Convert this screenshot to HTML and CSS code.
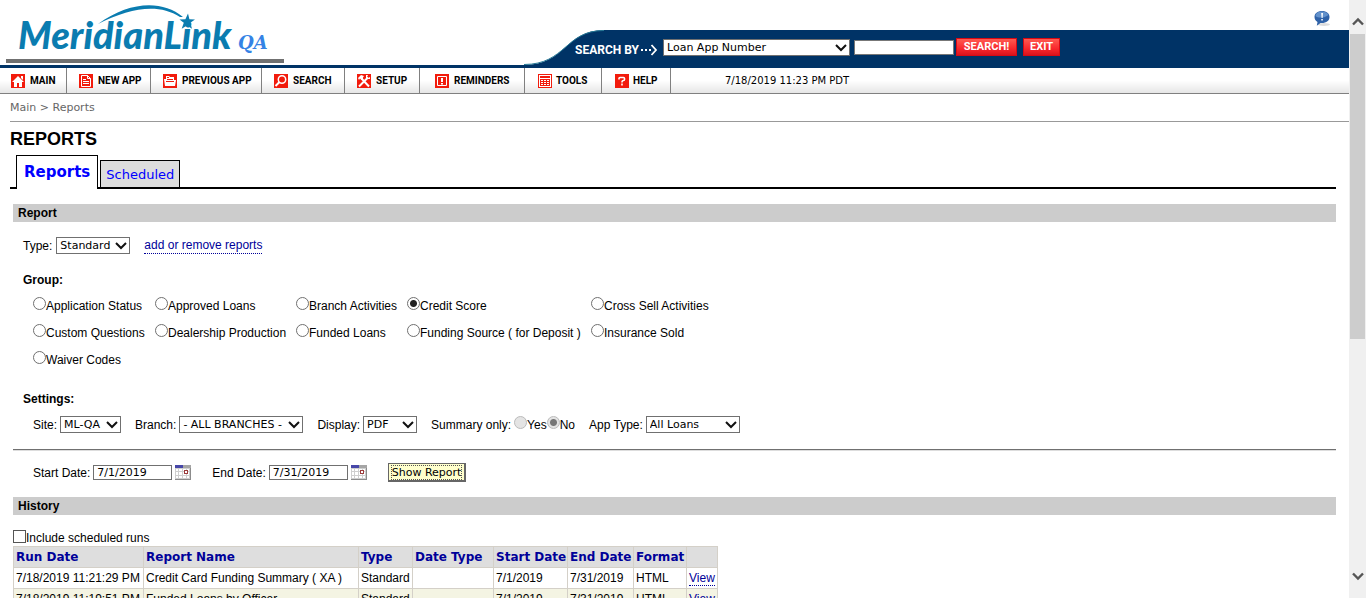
FILE: index.html
```html
<!DOCTYPE html>
<html lang="en">
<head>
<meta charset="utf-8">
<title>Reports</title>
<link rel="stylesheet" href="styles.css">
</head>
<body>
<svg class="defs" aria-hidden="true">
  <symbol id="chevron" viewBox="0 0 12 8"><path d="M1 1 L6 6 L11 1" fill="none" stroke="#111" stroke-width="2"/></symbol>
  <symbol id="calendar" viewBox="0 0 16 15">
    <rect width="16" height="15" fill="#8c8c8c"/>
    <rect width="15" height="14" fill="#cfcfcf"/>
    <path d="M1 4h2v2H1zM4 4h3v2H4zM8 4h3v2H8zM12 4h2v2h-2zM1 7h2v3H1zM4 7h3v3H4zM8 7h3v3H8zM12 7h2v3h-2zM1 11h2v2H1zM4 11h3v2H4zM8 11h3v2H8zM12 11h2v2h-2z" fill="#fff"/>
    <rect width="8" height="3" fill="#4747a8"/><rect x="8" width="8" height="3" fill="#a5a5a5"/>
    <rect x="9.5" y="5.500" width="3" height="3" fill="#fff" stroke="#9c3c3c"/>
  </symbol>
</svg>
<div class="window">
  <div class="page">
    <header class="header">
      <svg class="logo" width="290" height="65" viewBox="0 0 290 65" role="img" aria-label="MeridianLink QA">
        <text x="18" y="49" class="logo-name">MeridianLink</text>
        <path d="M98 24 C130 1 162 0 183 17 L180 17 C158 3 130 8 98 24Z" fill="#0a7cb0"/>
        <path d="M188 13.500 L189.400 19.300 L195 19.600 L190.300 22.800 L192 28.800 L187 25.400 L181.700 28.800 L183.800 22.800 L179.500 19.400 L185.400 19.200Z" fill="#0a7cb0"/>
        <text x="238" y="49" class="logo-qa">QA</text>
        <rect x="6" y="59" width="278" height="4" fill="#707070"/>
      </svg>
      <div class="header-main">
        <div class="header-top">
          <a href="#" aria-label="Notices"><svg width="18" height="17" viewBox="0 0 18 17">
            <ellipse cx="11" cy="14.500" rx="6" ry="1.500" fill="#ddd"/>
            <path d="M9 1C4.500 1 1.500 3.500 1.500 7C1.500 9.200 2.700 11 4.500 12L3.800 15.800L7.500 13C13 13.500 16.500 10.700 16.500 7C16.500 3.500 13.500 1 9 1Z" fill="#2f62a8"/>
            <path d="M9 1.500C5 1.500 2.500 3.500 2.500 6C5 8.500 12 8 15.500 5C14.500 2.800 12 1.500 9 1.500Z" fill="#6291cb"/>
            <path d="M8.200 3h1.800l-.4 5h-1zM8.300 9h1.500v1.500H8.300z" fill="#fff"/>
          </svg></a>
        </div>
        <form class="search-bar">
          <svg class="curve" width="80" height="35" viewBox="0 0 80 35"><path d="M0 35 C42 35 41 0 80 0 V35Z" fill="#003366"/><path d="M0 34.500 C42 34.500 41 .5 80 .5" fill="none" stroke="#247894" stroke-width="1"/></svg>
          <label for="by">SEARCH BY</label>
          <svg class="arrow" width="17" height="12" viewBox="0 0 17 12"><path d="M0 5h2v2H0zM4 5h2v2H4zM8 5h2v2H8z" fill="#fff"/><path d="M10.500 1L15 6L10.500 11" fill="none" stroke="#fff" stroke-width="1.800"/></svg>
          <span class="select w-by"><select id="by"><option>Loan App Number</option></select><svg><use href="#chevron"/></svg></span>
          <input class="search-text" type="text" aria-label="Search text">
          <button class="red w-search" type="button">SEARCH!</button>
          <button class="red w-exit" type="button">EXIT</button>
        </form>
      </div>
    </header>
    <nav class="nav">
      <a href="#" class="n-main"><svg class="icon" viewBox="0 0 14 14"><rect width="14" height="14" fill="#f21b0c"/><path d="M7 2L13 8h-2v5H8V9H6v4H3V8H1zM10 2h2v4l-2-2z" fill="#fff"/></svg>MAIN</a>
      <a href="#" class="n-new"><svg class="icon" viewBox="0 0 14 14"><rect width="14" height="14" fill="#f21b0c"/><path d="M2.500 1.500h6l3 3v8h-9z" fill="#f21b0c" stroke="#fff"/><path d="M8.500 1.500v3h3M4 5.500h3M4 7.500h6M4 9.500h6" fill="none" stroke="#fff"/></svg>NEW APP</a>
      <a href="#" class="n-prev"><svg class="icon" viewBox="0 0 14 14"><rect width="14" height="14" fill="#f21b0c"/><path d="M1 5h2V2h3l1 1h4v3h2l-1 6H2z" fill="#fff"/><path d="M4 3.500h2M4 5.500h6M3 7.500h8" fill="none" stroke="#f21b0c"/></svg>PREVIOUS APP</a>
      <a href="#" class="n-search"><svg class="icon" viewBox="0 0 14 14"><rect width="14" height="14" fill="#f21b0c"/><circle cx="8" cy="5.500" r="3.700" fill="none" stroke="#fff" stroke-width="1.500"/><path d="M5.500 8L1.500 12" stroke="#fff" stroke-width="2"/></svg>SEARCH</a>
      <a href="#" class="n-setup"><svg class="icon" viewBox="0 0 14 14"><rect width="14" height="14" fill="#f21b0c"/><path d="M2 12.500L11 3.500M4.500 4.500L12 12.500" stroke="#fff" stroke-width="2"/><path d="M1 4L4 1L7 2L6 3.500L6 5L4.500 6L3 4.500L2 6zM9 1v3l1.500 1H13V3L11 4L10 3L11 1z" fill="#fff"/></svg>SETUP</a>
      <a href="#" class="n-rem"><svg class="icon" viewBox="0 0 14 14"><rect width="14" height="14" fill="#f21b0c"/><path d="M2.500 2.500h9v9h-9z" fill="none" stroke="#fff"/><path d="M6 4h2v4H6zM6 9h2v1.500H6z" fill="#fff"/></svg>REMINDERS</a>
      <a href="#" class="n-tools"><svg class="icon" viewBox="0 0 14 14"><rect width="14" height="14" fill="#f21b0c"/><path d="M1 1h12v12H1z" fill="#fff"/><path d="M2 2h10v2H2zM2 5h10v7H2z" fill="#f21b0c"/><path d="M3 6h2v1H3zM6 6h2v1H6zM9 6h2v1H9zM3 8h2v1H3zM6 8h2v1H6zM9 8h2v1H9zM3 10h2v1H3zM6 10h2v1H6zM9 10h2v1H9z" fill="#fff"/></svg>TOOLS</a>
      <a href="#" class="n-help"><svg class="icon" viewBox="0 0 14 14"><rect width="14" height="14" fill="#f21b0c"/><path d="M4 5.500V4.500Q4 3.500 5 3.500H8.500Q9.500 3.500 9.500 4.500V5.500Q9.500 6.500 8.500 6.500Q7 6.500 7 8.500M7 9.500v2" fill="none" stroke="#fff" stroke-width="1.600"/></svg>HELP</a>
      <span class="clock">7/18/2019 11:23 PM PDT</span>
    </nav>
    <div class="crumbs"><a href="#">Main</a> &gt; <a href="#">Reports</a></div>
    <main class="content">
      <h1>REPORTS</h1>
      <div class="tabs"><a href="#" class="tab active">Reports</a><a href="#" class="tab">Scheduled</a></div>

      <h2>Report</h2>
      <div class="row type-row">
        <label for="type">Type:</label>
        <span class="select w-type"><select id="type"><option>Standard</option></select><svg><use href="#chevron"/></svg></span>
        <a href="#" class="link add-link">add or remove reports</a>
      </div>
      <h3>Group:</h3>
      <div class="groups">
        <label><input type="radio" name="g">Application Status</label>
        <label><input type="radio" name="g">Approved Loans</label>
        <label><input type="radio" name="g">Branch Activities</label>
        <label><input type="radio" name="g" checked>Credit Score</label>
        <label><input type="radio" name="g">Cross Sell Activities</label>
        <label><input type="radio" name="g">Custom Questions</label>
        <label><input type="radio" name="g">Dealership Production</label>
        <label><input type="radio" name="g">Funded Loans</label>
        <label><input type="radio" name="g">Funding Source ( for Deposit )</label>
        <label><input type="radio" name="g">Insurance Sold</label>
        <label><input type="radio" name="g">Waiver Codes</label>
      </div>
      <h3>Settings:</h3>
      <div class="row settings">
        <div class="field"><label for="site">Site:</label><span class="select w-site"><select id="site"><option>ML-QA</option></select><svg><use href="#chevron"/></svg></span></div>
        <div class="field"><label for="branch">Branch:</label><span class="select w-branch"><select id="branch"><option>- ALL BRANCHES -</option></select><svg><use href="#chevron"/></svg></span></div>
        <div class="field"><label for="display">Display:</label><span class="select w-display"><select id="display"><option>PDF</option></select><svg><use href="#chevron"/></svg></span></div>
        <div class="field"><span>Summary only:</span><span class="yesno"><label><input type="radio" name="s" disabled>Yes</label><label><input type="radio" name="s" checked disabled>No</label></span></div>
        <div class="field"><label for="app">App Type:</label><span class="select w-app"><select id="app"><option>All Loans</option></select><svg><use href="#chevron"/></svg></span></div>
      </div>
      <hr>
      <div class="row dates">
        <div class="field"><label for="start">Start Date:</label><input id="start" class="date" type="text" value="7/1/2019"><button class="cal" type="button" aria-label="Pick start date"><svg width="16" height="15"><use href="#calendar"/></svg></button></div>
        <div class="field"><label for="end">End Date:</label><input id="end" class="date" type="text" value="7/31/2019"><button class="cal" type="button" aria-label="Pick end date"><svg width="16" height="15"><use href="#calendar"/></svg></button></div>
        <button class="show" type="button"><span>Show Report</span></button>
      </div>

      <h2>History</h2>
      <label class="include"><input type="checkbox">Include scheduled runs</label>
      <table class="history">
        <colgroup><col class="c-run"><col class="c-name"><col class="c-type"><col class="c-dtype"><col class="c-start"><col class="c-end"><col class="c-format"><col class="c-view"></colgroup>
        <thead><tr><th>Run Date</th><th>Report Name</th><th>Type</th><th>Date Type</th><th>Start Date</th><th>End Date</th><th>Format</th><th></th></tr></thead>
        <tbody>
          <tr><td>7/18/2019 11:21:29 PM</td><td>Credit Card Funding Summary ( XA )</td><td>Standard</td><td></td><td>7/1/2019</td><td>7/31/2019</td><td>HTML</td><td><a href="#" class="link">View</a></td></tr>
          <tr><td>7/18/2019 11:19:51 PM</td><td>Funded Loans by Officer</td><td>Standard</td><td></td><td>7/1/2019</td><td>7/31/2019</td><td>HTML</td><td><a href="#" class="link">View</a></td></tr>
        </tbody>
      </table>
    </main>
  </div>
  <div class="scrollbar" aria-hidden="true">
    <svg width="12" height="9" viewBox="0 0 12 9"><path d="M1 7.500L6 2.500L11 7.500" fill="none" stroke="#555" stroke-width="2.400"/></svg>
    <div class="thumb"></div>
    <svg width="12" height="9" viewBox="0 0 12 9"><path d="M1 1.500L6 6.500L11 1.500" fill="none" stroke="#555" stroke-width="2.400"/></svg>
  </div>
</div>
</body>
</html>
```
FILE: styles.css
```css
* { box-sizing: border-box; }
body { margin: 0; background: #fff; color: #000; font: 12px/16px "Liberation Sans", Arial, sans-serif; }
a { text-decoration: none; color: inherit; }
input, select, button { margin: 0; border-radius: 0; color: #000; font: 11px "DejaVu Sans", Verdana, sans-serif; }
.defs { display: none; }
.window { display: flex; height: 100vh; overflow: hidden; }
.page { flex: 1; min-width: 0; overflow: hidden; }

.header { display: flex; border-bottom: 3px solid #003366; }
.logo { flex: none; margin-right: 234px; }
.logo-name { font: italic 900 38px Lato, sans-serif; fill: #0a7cb0; }
.logo-qa { font: italic bold 18px "DejaVu Serif", serif; fill: #3583e5; }
.header-main { flex: 1; }
.header-top { display: flex; justify-content: flex-end; align-items: flex-end; height: 30px; padding: 0 18px 3px 0; }
.header-top svg { display: block; }
.search-bar { position: relative; display: flex; height: 35px; padding-left: 51px; align-items: center; background: linear-gradient(#003366, #003366) no-repeat 79px 0; }
.curve { position: absolute; left: 0; top: 0; }
.search-bar label { position: relative; width: 66px; padding-top: 4px; color: #fff; font: bold 12px Roboto, sans-serif; white-space: nowrap; }
.arrow { margin: 4px 5px 0 0; }
.search-text { width: 100px; height: 15px; margin: 0 2px 0 4px; border: 1px solid #777; }
.red { height: 18px; margin: 0 6px 2px 0; padding: 0; border: 1px solid #d80a14; background: linear-gradient(#ff5a50, #f8282d 60%, #d9141c); color: #fff; font: bold 11px Roboto, sans-serif; }
.w-search { width: 61px; }
.w-exit { width: 37px; }

.select { position: relative; display: block; }
.select select { display: block; width: 100%; height: 17px; padding: 0 0 0 3px; border: 1px solid #707070; background: #fff; appearance: none; }
.select svg { position: absolute; right: 3px; top: 5px; width: 12px; height: 8px; pointer-events: none; }
.w-by { width: 187px; }
.w-type { width: 74px; }
.w-site { width: 61px; }
.w-branch { width: 124px; }
.w-display { width: 54px; }
.w-app { width: 94px; }

.nav { display: flex; height: 26px; border-bottom: 1px solid #808080; background: linear-gradient(#fff 50%, #e6e6e6); font: bold 10px Roboto, sans-serif; }
.nav a { display: flex; align-items: center; gap: 5px; padding-left: 12px; border-right: 1px solid #808080; white-space: nowrap; }
.icon { flex: none; width: 14px; height: 14px; }
.n-main { width: 67px; }
.nav .n-main { padding-left: 11px; }
.n-new { width: 84px; }
.n-prev { width: 111px; }
.n-search { width: 83px; }
.n-setup { width: 75px; }
.n-rem { width: 105px; }
.nav .n-rem { padding-left: 15px; }
.n-tools { width: 77px; }
.n-help { width: 69px; }
.nav .n-tools, .nav .n-help { padding-left: 13px; gap: 4px; }
.clock { align-self: center; margin-left: 54px; font: 10px "DejaVu Sans", Verdana, sans-serif; }

.crumbs { margin-left: 10px; padding: 6px 0 5px; border-bottom: 1px solid #999; color: #666; font: 11px/16px "DejaVu Sans", Verdana, sans-serif; }
.content { margin: 0 13px; }
h1 { margin: 6px -3px 5px; font: bold 18px/22px "Liberation Sans", Arial, sans-serif; }
.tabs { display: flex; align-items: flex-end; gap: 2px; margin: 0 0 15px -3px; padding-left: 6px; border-bottom: 2px solid #000; }
.tab { padding: 5px 5px 4px; border: 1px solid #000; border-bottom: 0; background: #ddd; color: #00f; font: 13px/17px "DejaVu Sans", Verdana, sans-serif; }
.tab.active { margin-bottom: -2px; padding: 8px 7px; background: #fff; font-size: 15px; font-weight: bold; }
h2 { margin: 0; padding: 1px 5px; background: #ccc; font: bold 12px/16px "Liberation Sans", Arial, sans-serif; }
.row { display: flex; align-items: center; white-space: nowrap; }
.type-row { gap: 4px; padding: 15px 10px 0; }
.link { color: #000099; border-bottom: 1px dotted #000099; line-height: 15px; }
.add-link { margin-left: 10px; }
h3 { margin: 18px 0 0 10px; font: bold 12px/16px "Liberation Sans", Arial, sans-serif; }
.groups { display: grid; grid-template-columns: 122px 141px 111px 184px auto; row-gap: 10px; margin: 9px 0 23px 20px; justify-content: start; white-space: nowrap; }
.groups label, .yesno label { display: flex; align-items: center; }
input[type=radio] { flex: none; width: 13px; height: 13px; margin-bottom: 4px; border: 1px solid #707070; border-radius: 50%; background: #fff; appearance: none; }
input[type=radio]:checked { background: radial-gradient(circle, #222 3px, #fff 4px); }
input[type=radio]:disabled { border-color: #bbb; background: #e4e4e4; }
input[type=radio]:disabled:checked { background: radial-gradient(circle, #777 3px, #e4e4e4 4px); }
.yesno { display: flex; }
.field { display: flex; align-items: center; gap: 3px; }
.settings { gap: 14px; padding: 9px 20px 0; }
hr { margin: 16px 0 12px; border: 0; border-top: 1px solid #707070; border-bottom: 1px solid #ddd; }
.dates { gap: 21px; padding: 0 20px 15px; }
.date { width: 79px; height: 15px; padding: 0 3px; border: 1px solid #707070; }
.cal { padding: 0; border: 0; background: none; }
.cal svg { display: block; }
.show { height: 19px; padding: 1px 3px; border: 1px solid #666; border-right-width: 2px; border-bottom-width: 2px; background: #ffffcc; }
.show span { display: block; outline: 1px dotted #555; line-height: 13px; }
.include { display: flex; align-items: center; padding-top: 15px; line-height: 16px; }
.include input { width: 13px; height: 13px; margin-bottom: 3px; border: 1px solid #555; background: #fff; appearance: none; }
.history { table-layout: fixed; width: 705px; border-collapse: collapse; white-space: nowrap; }
.history th, .history td { height: 21px; padding: 0 2px; border: 1px solid #d4d0c8; text-align: left; }
.history th { background: #dedede; color: #000099; font: bold 12px/16px "DejaVu Sans", Verdana, sans-serif; }
.history tbody tr:nth-child(even) { background: #f4f4e3; }
.c-run { width: 130px; }
.c-name { width: 215px; }
.c-type { width: 54px; }
.c-dtype { width: 81px; }
.c-start { width: 74px; }
.c-end { width: 66px; }
.c-format { width: 53px; }
.c-view { width: 31px; }

.scrollbar { display: flex; flex: none; flex-direction: column; align-items: center; width: 17px; padding: 17px 0; background: #f0f0f0; }
.thumb { width: 15px; height: 51vh; margin: 8px 0 auto; background: #cdcdcd; }
```
